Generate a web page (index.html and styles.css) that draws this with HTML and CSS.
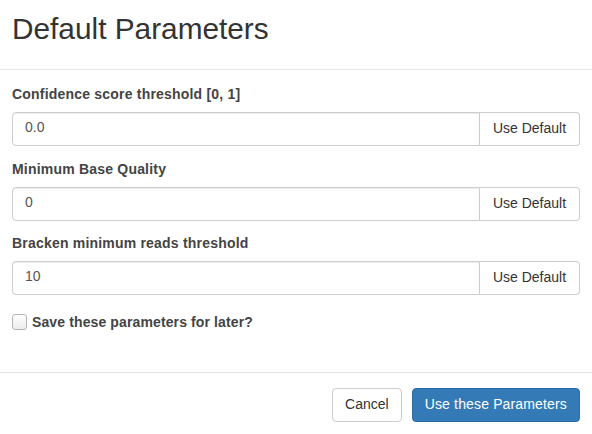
FILE: index.html
```html
<!DOCTYPE html>
<html>
<head>
<meta charset="utf-8">
<link rel="stylesheet" href="styles.css">
</head>
<body>
<div class="modal">
  <div class="modal-header">
    <h3 class="modal-title">Default Parameters</h3>
  </div>
  <div class="modal-body">
    <div class="form-group">
      <label class="field-label">Confidence score threshold [0, 1]</label>
      <div class="input-group">
        <input class="form-control" type="text" value="0.0">
        <button class="btn btn-default addon">Use Default</button>
      </div>
    </div>
    <div class="form-group">
      <label class="field-label">Minimum Base Quality</label>
      <div class="input-group">
        <input class="form-control" type="text" value="0">
        <button class="btn btn-default addon">Use Default</button>
      </div>
    </div>
    <div class="form-group">
      <label class="field-label">Bracken minimum reads threshold</label>
      <div class="input-group">
        <input class="form-control" type="text" value="10">
        <button class="btn btn-default addon">Use Default</button>
      </div>
    </div>
    <div class="checkbox">
      <label class="check-label"><input type="checkbox" class="check"><span>Save these parameters for later?</span></label>
    </div>
  </div>
  <div class="modal-footer">
    <button class="btn btn-default">Cancel</button>
    <button class="btn btn-primary">Use these Parameters</button>
  </div>
</div>
</body>
</html>
```

FILE: styles.css
```css
* { box-sizing: border-box; }
html, body {
  margin: 0;
  padding: 0;
  background: #fff;
}
body {
  font-family: "Liberation Sans", Arial, Helvetica, sans-serif;
  font-size: 14px;
  line-height: 20px;
  color: #333;
}
.modal {
  width: 592px;
  height: 434px;
  overflow: hidden;
}
.modal-header {
  padding: 12px 12px 24px;
  border-bottom: 1px solid #e5e5e5;
}
.modal-title {
  margin: 0;
  font-size: 29.8px;
  line-height: 33px;
  font-weight: 400;
  color: #333;
}
.modal-body {
  padding: 14px 12px 0;
  height: 302px;
}
.form-group {
  margin-bottom: 12.5px;
}
.field-label {
  display: block;
  font-weight: 700;
  margin-bottom: 8px;
  line-height: 20px;
  color: #444;
  letter-spacing: 0.2px;
}
.input-group {
  display: flex;
  height: 34px;
}
.form-control {
  flex: 1;
  min-width: 0;
  height: 34px;
  padding: 4px 12px 8px;
  font-family: inherit;
  font-size: 14px;
  color: #555;
  background: #fff;
  border: 1px solid #ccc;
  border-radius: 4px 0 0 4px;
  box-shadow: inset 0 1px 1px rgba(0,0,0,.075);
  outline: none;
}
.btn {
  height: 34px;
  padding: 5px 12px 7px;
  font-family: inherit;
  font-size: 14px;
  line-height: 20px;
  border: 1px solid transparent;
  border-radius: 4px;
  cursor: pointer;
  white-space: nowrap;
}
.btn-default {
  color: #333;
  background: #fff;
  border-color: #ccc;
}
.addon {
  border-left: 0;
  border-radius: 0 4px 4px 0;
  margin-left: 0;
  width: 100px;
}
.btn-primary {
  color: #fff;
  background: #337ab7;
  border-color: #2e6da4;
  letter-spacing: 0.15px;
}
.checkbox {
  margin-top: 17px;
}
.check-label {
  display: flex;
  align-items: center;
  font-weight: 700;
  line-height: 20px;
  color: #444;
  letter-spacing: 0.12px;
}
.check {
  appearance: none;
  -webkit-appearance: none;
  width: 15px;
  height: 16px;
  margin: 0 5px 0 0;
  border: 1px solid #b5b5b5;
  border-radius: 3px;
  background: linear-gradient(#fff, #ececec);
}
.modal-footer {
  border-top: 1px solid #e5e5e5;
  padding: 15px 12px;
  display: flex;
  justify-content: flex-end;
  gap: 10px;
}
```
